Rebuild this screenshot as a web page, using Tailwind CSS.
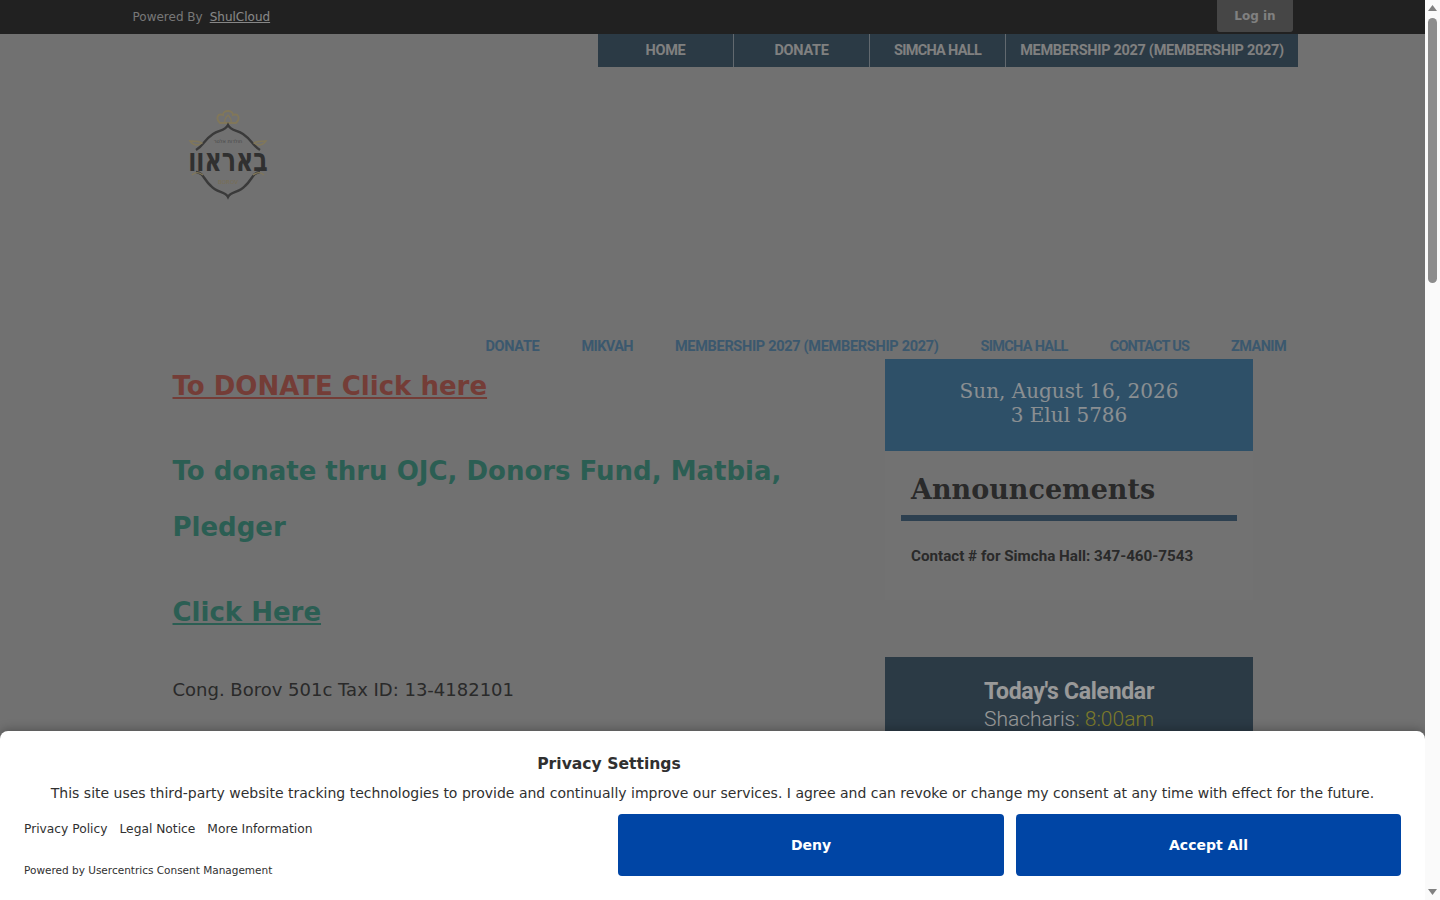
<!DOCTYPE html>
<html lang="en">
<head>
    <meta charset="UTF-8">
    <title>Cong. Borov</title>
    <script src="https://cdn.jsdelivr.net/npm/@tailwindcss/browser@4"></script>
</head>
<body class="h-[900px] w-[1440px] overflow-hidden bg-white font-['DejaVu_Sans',sans-serif] text-[#3a3a3a]">
    <div class="relative h-[900px] w-[1440px] overflow-hidden">

        <!-- page -->
        <div class="h-[900px] w-[1425px] overflow-hidden bg-[#bcbcbc]">
            <div class="flex h-[34px] items-start justify-between bg-[#373737] pl-[132.5px] pr-[132px]">
                <div class="flex items-center gap-[7px] pt-[10px] text-xs leading-[15px] text-[#c6c6c6]">
                    <span>Powered By</span>
                    <a class="text-[#e2e2e2] underline">ShulCloud</a>
                </div>
                <a class="flex h-[32px] w-[76px] items-center justify-center rounded-b-[3px] bg-[#767676] text-xs font-bold text-[#d5d5d5]">Log in</a>
            </div>

            <div class="ml-[598px] flex h-[33px] w-[700px] bg-[#486173] font-['Roboto',sans-serif] text-[14.5px] font-bold text-[#d5d5d5]">
                <a class="flex w-[136px] items-center justify-center border-r border-white/50 tracking-[-0.3px]">HOME</a>
                <a class="flex w-[136px] items-center justify-center border-r border-white/50 tracking-[-0.3px]">DONATE</a>
                <a class="flex w-[136px] items-center justify-center border-r border-white/50 tracking-[-0.7px]">SIMCHA HALL</a>
                <a class="flex flex-1 items-center justify-center whitespace-nowrap tracking-[-0.3px]">MEMBERSHIP 2027 (MEMBERSHIP 2027)</a>
            </div>

            <div class="ml-[189px] mt-[43px] h-[90px] w-[80px]">
                <svg class="overflow-visible" width="80" height="90" viewBox="0 0 80 90" fill="none">
                    <!-- crown -->
                    <path d="M31 13 C26 8 29 3 34 5 C34 2 37 1 39 1 C41 1 44 2 44 5 C49 3 52 8 47 13 Z" stroke="#d8c795" stroke-width="1.8"/>
                    <path d="M36 13 C35 9 37 7 39 5 C41 7 43 9 42 13" stroke="#d8c795" stroke-width="1.2"/>
                    <!-- frame -->
                    <path d="M7 40 C14 36 15 30 24 24 C30 20 36 21 39 15 C42 21 48 20 54 24 C63 30 64 36 71 40" stroke="#616161" stroke-width="2.4"/>
                    <path d="M7 62 C15 63 14 69 22 76 C28 83 36 81 39 87 C42 81 50 83 56 76 C64 69 63 63 71 62" stroke="#616161" stroke-width="2.4"/>
                    <!-- flourishes -->
                    <path d="M1 31 C5 36 9 36 13 33 C10 31 6 31 1 31 Z M77 31 C73 36 69 36 65 33 C68 31 72 31 77 31 Z M3 65 C6 62 10 62 14 65 M75 65 C72 62 68 62 64 65" stroke="#d8c795" stroke-width="1.4"/>
                    <text x="39" y="33" text-anchor="middle" font-family="'DejaVu Sans',sans-serif" font-size="5" fill="#777">חולדות אלטר</text>
                    <text transform="translate(39 61) scale(1.13 1.55)" text-anchor="middle" font-family="'DejaVu Sans',sans-serif" font-weight="700" font-size="21" fill="#505050">באראוו</text>
                    <text x="39" y="74" text-anchor="middle" font-family="'DejaVu Sans',sans-serif" font-size="5.5" fill="#c9b98b">BOROV</text>
                </svg>
            </div>

            <div class="mb-[1px] mt-[136px] flex justify-end pr-[139px] font-['Roboto',sans-serif] text-[14.5px] font-bold leading-[22px] text-[#6393b8]">
                <div class="flex gap-[42px] whitespace-nowrap">
                    <a class="tracking-[-0.3px]">DONATE</a>
                    <a class="tracking-[-0.6px]">MIKVAH</a>
                    <a class="tracking-[-0.3px]">MEMBERSHIP 2027 (MEMBERSHIP 2027)</a>
                    <a class="tracking-[-0.7px]">SIMCHA HALL</a>
                    <a class="tracking-[-0.8px]">CONTACT US</a>
                    <a class="tracking-[-0.6px]">ZMANIM</a>
                </div>
            </div>

            <div class="ml-[172.5px] flex w-[1080.5px] justify-between">
                <div class="w-[640px] pt-[8px]">
                    <a class="text-[26px] font-bold leading-[38px] text-[#c2665c] underline">To DONATE Click here</a>
                    <div class="mt-[38px] w-[640px] text-[26px] font-bold leading-[56px] text-[#499d8b]">To donate thru OJC, Donors Fund, Matbia, Pledger</div>
                    <a class="mt-[38px] block text-[26px] font-bold leading-[38px] text-[#499d8b] underline">Click Here</a>
                    <p class="mt-[45px] text-lg leading-[28px] text-[#464646]">Cong. Borov 501c Tax ID: 13-4182101</p>
                </div>

                <div class="w-[368px]">
                    <div class="flex h-[92px] flex-col items-center bg-[#4e85ad] pt-[20px] font-['DejaVu_Serif',serif] text-xl leading-[24px] text-[#e6eef3]">
                        <span>Sun, August 16, 2026</span>
                        <span>3 Elul 5786</span>
                    </div>
                    <div class="h-[149px] bg-[#bfbfbf] px-[16px] pt-[21px]">
                        <h2 class="border-b-[6px] border-[#4b6b85] pb-[7px] pl-[10px] font-['DejaVu_Serif',serif] text-[27px] font-bold leading-[36px] text-[#464646]">Announcements</h2>
                        <p class="mt-[25px] pl-[10px] font-['Roboto',sans-serif] text-[15.2px] font-bold leading-[20px] text-[#464646]">Contact # for Simcha Hall: 347-460-7543</p>
                    </div>
                    <div class="mt-[57px] flex h-[200px] flex-col items-center bg-[#486173] pt-[21px] font-['Roboto',sans-serif] text-white">
                        <span class="text-[23px] font-bold leading-[28px] tracking-[-0.3px]">Today's Calendar</span>
                        <span class="text-[21px] font-light leading-[27px]">Shacharis<span class="text-[#d0cb46]">: 8:00am</span></span>
                    </div>
                </div>
            </div>
        </div>

        <!-- dim -->
        <div class="absolute inset-0 bg-black/40"></div>

        <!-- consent banner -->
        <div class="absolute bottom-0 left-0 h-[169px] w-[1425px] rounded-t-[8px] bg-white px-[24px] text-[#303030] shadow-[0_-2px_10px_rgba(0,0,0,0.25)]">
            <h1 class="mt-[23px] w-[1170px] text-center text-[15.6px] font-bold leading-[20px]">Privacy Settings</h1>
            <p class="mt-[9px] text-center text-sm leading-[20px]">This site uses third-party website tracking technologies to provide and continually improve our services. I agree and can revoke or change my consent at any time with effect for the future.</p>
            <div class="mt-[11px] flex items-start justify-between">
                <div>
                    <div class="mt-[7px] flex gap-[12px] text-[12.25px] leading-[16px]">
                        <a>Privacy Policy</a>
                        <a>Legal Notice</a>
                        <a>More Information</a>
                    </div>
                    <div class="mt-[26px] text-[10.5px] leading-[14px]">Powered by Usercentrics Consent Management</div>
                </div>
                <div class="flex gap-[12px] text-sm font-bold text-white">
                    <button class="h-[62px] w-[386px] rounded-[4px] bg-[#0045a5]">Deny</button>
                    <button class="h-[62px] w-[385px] rounded-[4px] bg-[#0045a5]">Accept All</button>
                </div>
            </div>
        </div>

        <!-- scrollbar -->
        <div class="absolute inset-y-0 right-0 flex w-[15px] flex-col items-center bg-[#fafafa]">
            <svg class="mt-[5px]" width="9" height="6" viewBox="0 0 9 6"><path d="M4.5 0 L9 6 L0 6 Z" fill="#808080"/></svg>
            <div class="mt-[7px] h-[265px] w-[9px] rounded-[5px] bg-[#8c8c8c]"></div>
            <svg class="mb-[5px] mt-auto" width="9" height="6" viewBox="0 0 9 6"><path d="M0 0 L9 0 L4.5 6 Z" fill="#808080"/></svg>
        </div>
    </div>
</body>
</html>
